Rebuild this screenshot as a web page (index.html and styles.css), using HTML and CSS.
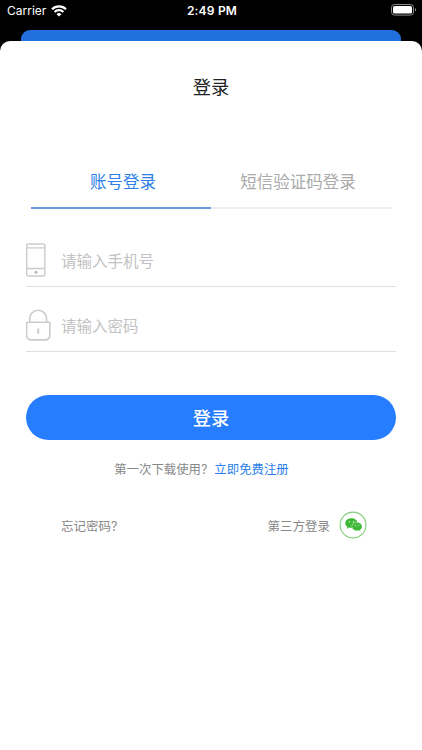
FILE: index.html
```html
<!DOCTYPE html>
<html lang="zh-CN">
<head>
    <meta charset="UTF-8">
    <meta name="viewport" content="width=device-width, initial-scale=1.0">
    <title>登录</title>
    <link rel="stylesheet" href="styles.css">
</head>
<body>

<div class="status-bar">
    <div class="carrier">
        <span>Carrier</span>
        <svg width="16" height="12" viewBox="0 0 16 12" fill="none" stroke="#fff" stroke-width="2.2">
            <path d="M1 4.2a10 10 0 0 1 14 0"/>
            <path d="M3.6 7a6.3 6.3 0 0 1 8.8 0"/>
            <path d="M8 11.6L5.6 9.2a3.4 3.4 0 0 1 4.8 0z" fill="#fff" stroke="none"/>
        </svg>
    </div>
    <div class="time">2:49 PM</div>
    <div class="battery">
        <svg width="26" height="12" viewBox="0 0 26 12">
            <rect x="0.5" y="0.5" width="22" height="10.6" rx="3" fill="none" stroke="#8a8a8a"/>
            <rect x="2" y="2" width="19" height="7.6" rx="1.6" fill="#fff"/>
            <path d="M24 4v3.6c1.6-.6 1.6-3 0-3.6z" fill="#8a8a8a"/>
        </svg>
    </div>
</div>

<div class="back-card"></div>

<div class="sheet">
    <h2>登录</h2>

    <div class="tabs">
        <a class="tab active">账号登录</a>
        <a class="tab">短信验证码登录</a>
    </div>

    <form action="/" method="post" id="loginForm">
        <div class="field">
            <svg class="phone-icon" width="20" height="34" viewBox="0 0 20 34" fill="none" stroke="#cbcbcd" stroke-width="1.4">
                <rect x="0.7" y="1" width="18.2" height="32" rx="1.6"/>
                <path d="M1 4.9h18M1 25.5h18"/>
                <circle cx="10" cy="29.3" r="1.5" fill="#b8b8ba" stroke="none"/>
            </svg>
            <input type="text" id="phone" name="phone" placeholder="请输入手机号">
        </div>
        <div class="field">
            <svg class="lock-icon" width="26" height="32" viewBox="0 0 26 32" fill="none" stroke="#cbcbcd" stroke-width="1.6">
                <path d="M1.4 13.3h21.6a.8.8 0 0 1 .8.8v12.3a4.5 4.5 0 0 1-4.5 4.5H5.1a4.5 4.5 0 0 1-4.5-4.5V14.1a.8.8 0 0 1 .8-.8z"/>
                <path d="M3.8 13.3V9.6a8.4 8.4 0 0 1 16.8 0v3.7"/>
                <path d="M12.2 19.5v5.2" stroke-width="2"/>
            </svg>
            <input type="password" id="password" name="password" placeholder="请输入密码">
        </div>

        <button type="submit" class="login-btn">登录</button>
    </form>

    <div class="register">
        <span>第一次下载使用?</span>
        <a>立即免费注册</a>
    </div>

    <div class="footer">
        <a>忘记密码?</a>
        <div class="third-party">
            <span>第三方登录</span>
            <svg width="28" height="28" viewBox="0 0 28 28">
                <circle cx="14" cy="14" r="12.9" fill="#fff" stroke="#7fce78" stroke-width="1.1"/>
                <path d="M12.4 7.2c-3.5 0-6.1 2.2-6.1 5 0 1.5.8 2.8 2.1 3.7l-.6 1.8 2.2-1.1c.8.2 1.5.3 2.4.3 3.4 0 6.1-2.1 6.1-4.8 0-2.8-2.7-4.9-6.1-4.9z" fill="#3fb837"/>
                <path d="M18 11.2c-2.9 0-5.2 1.9-5.2 4.3s2.3 4.3 5.2 4.3c.6 0 1.2-.1 1.8-.3l1.8 1-.5-1.6c1.2-.8 2-1.9 2-3.4 0-2.3-2.3-4.3-5.1-4.3z" fill="#3fb837" stroke="#fff" stroke-width=".4"/>
                <circle cx="10.4" cy="10.8" r=".65" fill="#fff"/>
                <circle cx="14.5" cy="10.8" r=".65" fill="#fff"/>
                <circle cx="16.3" cy="14.3" r=".5" fill="#fff"/>
                <circle cx="19.7" cy="14.3" r=".5" fill="#fff"/>
            </svg>
        </div>
    </div>
</div>

</body>
</html>
```
FILE: styles.css
```css
body {
    font-family: Inter, "Noto Sans CJK SC", sans-serif;
    background-color: #000;
    margin: 0;
    padding: 0;
    height: 750px;
    display: flex;
    flex-direction: column;
    overflow: hidden;
}
.status-bar {
    display: grid;
    grid-template-columns: 1fr auto 1fr;
    height: 22px;
    padding: 0 5px 0 7px;
    color: #fff;
    font-size: 12px;
    line-height: 22px;
}
.carrier {
    display: flex;
    align-items: center;
    gap: 5px;
}
.time {
    font-weight: 600;
    letter-spacing: 0.2px;
}
.battery {
    display: flex;
    justify-content: flex-end;
    align-items: center;
    padding-bottom: 2px;
}
.back-card {
    height: 11px;
    margin: 8px 21px 0;
    background-color: #226fdf;
    border-radius: 9px 9px 0 0;
}
.sheet {
    flex: 1;
    box-sizing: border-box;
    background-color: #fff;
    border-radius: 10px 10px 0 0;
    padding: 32px 26px 0;
}
h2 {
    color: #222;
    font-size: 18.3px;
    font-weight: 400;
    line-height: 28px;
    text-align: center;
    margin: 0 0 54px;
}
.tabs {
    display: flex;
    margin: 0 5px;
}
.tab {
    width: 50%;
    box-sizing: border-box;
    height: 54px;
    padding: 1px 6px 0 0;
    line-height: 53px;
    font-size: 16.5px;
    text-align: center;
    color: #aaa;
    border-bottom: 2px solid #efefef;
}
.tab.active {
    padding: 1px 0 0 4px;
    color: #2e7fe8;
    border-bottom-color: #669ce4;
}
#loginForm {
    padding-top: 25px;
}
.field {
    display: flex;
    align-items: center;
    height: 52px;
    margin-bottom: 12px;
    border-bottom: 1px solid #dfdfdf;
}
.phone-icon {
    margin-right: 15px;
}
.lock-icon {
    margin-right: 9px;
}
.field input {
    flex: 1;
    height: 30px;
    padding: 2px 0 0;
    border: none;
    outline: none;
    background: none;
    font-family: inherit;
    font-size: 15.5px;
    color: #333;
}
.field input::placeholder {
    color: #c2c2c4;
}
.login-btn {
    display: block;
    width: 100%;
    height: 45px;
    margin-top: 43px;
    padding: 0 0 2px;
    border: none;
    border-radius: 23px;
    background-color: #267dff;
    color: #fff;
    font-family: inherit;
    font-size: 18.3px;
    font-weight: 500;
    cursor: pointer;
}
.register {
    display: flex;
    justify-content: center;
    gap: 7px;
    margin: 20px 19px 0 0;
    font-size: 12.4px;
    line-height: 20px;
    color: #888;
}
.register a {
    color: #2e7fe8;
}
.footer {
    display: flex;
    justify-content: space-between;
    align-items: center;
    margin-top: 31px;
    padding: 0 29px 0 35px;
    font-size: 12.5px;
    color: #888;
}
.third-party {
    display: flex;
    align-items: center;
    gap: 9px;
}
```
